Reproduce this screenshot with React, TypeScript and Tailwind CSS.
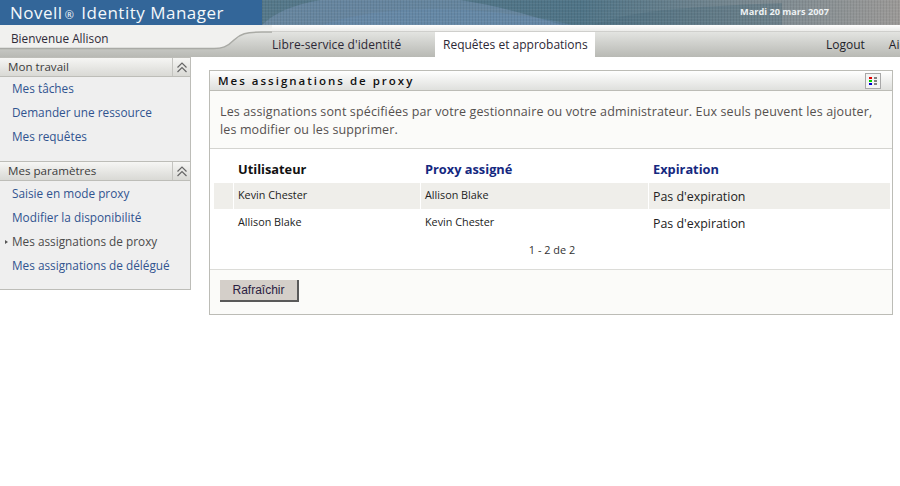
const font = { fontFamily: '"Open Sans", "DejaVu Sans", sans-serif' };

function Chevrons() {
  return (
    <svg width="12" height="11" viewBox="0 0 12 11" fill="none" stroke="#666" strokeWidth="1.2">
      <path d="M1.5 5.5 6 1l4.500 4.500" />
      <path d="M1.500 10 6 5.500l4.500 4.500" />
    </svg>
  );
}

function SectionHeader({ title }: { title: string }) {
  return (
    <div className="flex h-[20px] items-stretch border-y border-[#bdbdb8] bg-gradient-to-b from-[#f6f6f4] to-[#d9d9d5]">
      <div className="flex-1 pl-[8px] text-[11.600px] leading-[18px] text-[#3c3c3c]">{title}</div>
      <div className="flex w-[18px] items-center justify-center border-l border-[#c4c4c0]">
        <Chevrons />
      </div>
    </div>
  );
}

function NavItem({ label, active }: { label: string; active?: boolean }) {
  return (
    <div className={`relative h-[24px] whitespace-nowrap pl-[12px] text-[11.800px] leading-[23px] ${active ? "text-[#4a4a4a]" : "text-[#31548f]"}`}>
      {active && <span className="absolute left-[5px] top-[10px] h-0 w-0 border-y-[2px] border-l-[3px] border-y-transparent border-l-[#555]" />}
      {label}
    </div>
  );
}

const rows = [
  ["Kevin Chester", "Allison Blake", "Pas d'expiration"],
  ["Allison Blake", "Kevin Chester", "Pas d'expiration"],
];

export default function App() {
  return (
    <div className="h-[486px] w-[900px] overflow-hidden bg-white" style={font}>
      <header className="flex h-[25px]">
        <div className="w-[262px] whitespace-nowrap bg-[#336699] pl-[10px] text-[17px] leading-[25px] tracking-[0.5px] text-[#f4f8fb]">
          Novell<span className="mx-[2px] text-[11px]">®</span> Identity Manager
        </div>
        <div className="relative flex-1 overflow-hidden bg-gradient-to-r from-[#55788a] via-[#4f7487] to-[#9c9a98]">
          <svg className="absolute left-0 top-0" width="520" height="25" viewBox="0 0 520 25">
            <path d="M0 25C20 5 60-5 130-5s120 15 170 30Z" fill="#7390ad" opacity="0.6" />
            <path d="M60 25C100 10 170 5 230 12s60 8 80 13Z" fill="#668bb1" opacity="0.4" />
            <path d="M330 25C370 12 400 8 520 3V25Z" fill="#47697a" opacity="0.35" />
          </svg>
          <div className="absolute inset-0 bg-[repeating-linear-gradient(90deg,rgba(0,0,0,0.07)_0px,rgba(0,0,0,0.07)_1px,transparent_1px,transparent_3px)]" />
          <div className="absolute inset-0 bg-[repeating-linear-gradient(0deg,rgba(255,255,255,0.05)_0px,rgba(255,255,255,0.05)_1px,transparent_1px,transparent_3px)]" />
          <span className="absolute left-[478px] top-0 whitespace-nowrap text-[9.200px] font-bold leading-[24px] text-[#eef2f4]">Mardi 20 mars 2007</span>
        </div>
      </header>

      <div className="relative h-[32px] text-[12px]">
        <div className="h-[6px] bg-gradient-to-b from-[#ffffff] to-[#ececea]" />
        <div className="h-[1px] bg-[#cfcfcc]" />
        <div className="h-[25px] bg-gradient-to-b from-[#e3e4e1] to-[#b8b9b4]" />
        <svg className="absolute left-0 top-0" width="272" height="32" viewBox="0 0 272 32">
          <path d="M0 0H272V7H262C246 7 240 9 234 15 227 22 222 23 214 23H0Z" fill="#f1f1ef" />
          <path d="M0 23.500H214C222 23.500 227 22 234 15 240 9 246 7 262 7H272" fill="none" stroke="#a9aaa5" strokeWidth="1.500" />
        </svg>
        <div className="absolute inset-0 flex whitespace-nowrap">
          <div className="w-[272px] shrink-0 pl-[11px] pt-[5px] text-[11.800px] leading-[16px] text-[#2f2a38]">Bienvenue Allison</div>
          <div className="w-[163px] shrink-0 pt-[12px] leading-[16px] tracking-[0.1px] text-[#2c2836]">Libre-service d'identité</div>
          <div className="mt-[7px] h-[25px] w-[160px] shrink-0 bg-white pl-[8px] pt-[5px] leading-[16px] text-[#2c2836]">Requêtes et approbations</div>
          <div className="ml-[231px] shrink-0 pt-[12px] leading-[16px] text-[#1f1f2a]">Logout</div>
          <div className="ml-[24px] shrink-0 pt-[12px] leading-[16px] text-[#1f1f2a]">Aide</div>
        </div>
      </div>

      <div className="flex items-start">
        <aside className="h-[233px] w-[191px] border-r border-b border-[#bdbdb8] bg-[#efefef]">
          <SectionHeader title="Mon travail" />
          <div className="pb-[12px]">
            <NavItem label="Mes tâches" />
            <NavItem label="Demander une ressource" />
            <NavItem label="Mes requêtes" />
          </div>
          <SectionHeader title="Mes paramètres" />
          <div className="pt-[1px]">
            <NavItem label="Saisie en mode proxy" />
            <NavItem label="Modifier la disponibilité" />
            <NavItem label="Mes assignations de proxy" active />
            <NavItem label="Mes assignations de délégué" />
          </div>
        </aside>

        <main className="ml-[18px] mt-[13px] h-[245px] w-[684px] border border-[#bcbcb6] bg-[#fbfbf9]">
          <div className="flex h-[20px] items-center justify-between border-b border-[#bcbcb6] bg-gradient-to-b from-[#ffffff] to-[#dfe0dd] pl-[8px] pr-[11px]">
            <span className="whitespace-nowrap pt-[1px] text-[11.500px] font-semibold tracking-[2px] text-[#111]">Mes assignations de proxy</span>
            <span className="flex h-[16px] w-[16px] items-center justify-center border border-[#a8a8a8] bg-[#f4f4f4]">
              <svg width="10" height="10" viewBox="0 0 10 10">
                <rect x="1" y="1" width="3" height="2" fill="#e00000" />
                <rect x="1" y="4" width="3" height="2" fill="#00d000" />
                <rect x="1" y="7" width="3" height="2" fill="#0000d0" />
                <rect x="6" y="1" width="3" height="2" fill="#808080" />
                <rect x="6" y="4" width="3" height="2" fill="#808080" />
                <rect x="6" y="7" width="3" height="2" fill="#808080" />
              </svg>
            </span>
          </div>
          <div className="h-[58px] border-b border-[#d4d4d0] pl-[10px] pt-[12px] text-[12.500px] leading-[18px] tracking-[0.13px] text-[#55504f]">
            <div className="whitespace-nowrap">Les assignations sont spécifiées par votre gestionnaire ou votre administrateur. Eux seuls peuvent les ajouter,</div>
            <div>les modifier ou les supprimer.</div>
          </div>
          <div className="h-[121px] border-b border-[#dcdcd8] bg-white pl-[4px] pr-[2px]">
            <div className="flex h-[34px] items-center pt-[8px] text-[12.800px] font-bold">
              <div className="w-[20px]" />
              <div className="w-[187px] pl-[4px] text-[#111]">Utilisateur</div>
              <div className="w-[228px] pl-[4px] text-[#14287f]">Proxy assigné</div>
              <div className="pl-[4px] text-[#14287f]">Expiration</div>
            </div>
            {rows.map((r, i) => (
              <div key={i} className={`flex h-[26px] items-center text-[10.800px] text-[#222] ${i === 1 ? "mt-[1px]" : ""}`}>
                <div className={`h-full w-[19px] ${i === 0 ? "bg-[#efeeea]" : ""}`} />
                <div className={`ml-[1px] flex h-full w-[186px] items-center pb-[2px] pl-[4px] ${i === 0 ? "bg-[#efeeea]" : ""}`}>{r[0]}</div>
                <div className={`ml-[1px] flex h-full w-[227px] items-center pb-[2px] pl-[4px] ${i === 0 ? "bg-[#efeeea]" : ""}`}>{r[1]}</div>
                <div className={`ml-[1px] flex h-full flex-1 items-center pl-[4px] pt-[2px] text-[12.400px] ${i === 0 ? "bg-[#efeeea]" : ""}`}>{r[2]}</div>
              </div>
            ))}
            <div className="mt-[3px] text-center text-[10.900px] leading-[22px] text-[#333]">1 - 2 de 2</div>
          </div>
          <div className="pl-[10px] pt-[10px]">
            <button className="block h-[22px] w-[79px] border-r-2 border-b-2 border-[#5a5a5a] bg-[#d4cfc9] text-center text-[12px] leading-[20px] text-[#2a2040]" style={{ fontFamily: '"Liberation Sans", sans-serif' }}>
              Rafraîchir
            </button>
          </div>
        </main>
      </div>
    </div>
  );
}
